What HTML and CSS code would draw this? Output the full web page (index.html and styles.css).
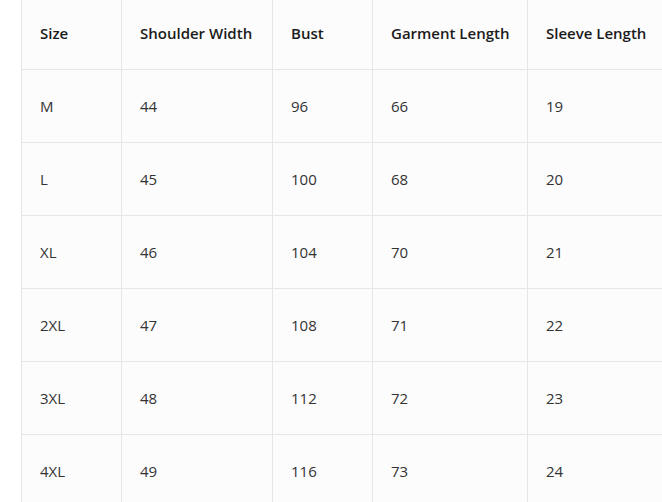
FILE: index.html
```html
<!DOCTYPE html>
<html>
<head>
<meta charset="utf-8">
<link rel="stylesheet" href="styles.css">
</head>
<body>
<div class="wrap">
<table class="size-table">
  <colgroup>
    <col class="c1"><col class="c2"><col class="c3"><col class="c4"><col class="c5">
  </colgroup>
  <thead>
    <tr><th>Size</th><th>Shoulder Width</th><th>Bust</th><th>Garment Length</th><th>Sleeve Length</th></tr>
  </thead>
  <tbody>
    <tr><td>M</td><td>44</td><td>96</td><td>66</td><td>19</td></tr>
    <tr><td>L</td><td>45</td><td>100</td><td>68</td><td>20</td></tr>
    <tr><td>XL</td><td>46</td><td>104</td><td>70</td><td>21</td></tr>
    <tr><td>2XL</td><td>47</td><td>108</td><td>71</td><td>22</td></tr>
    <tr><td>3XL</td><td>48</td><td>112</td><td>72</td><td>23</td></tr>
    <tr><td>4XL</td><td>49</td><td>116</td><td>73</td><td>24</td></tr>
  </tbody>
</table>
</div>
</body>
</html>
```

FILE: styles.css
```css
html, body {
  margin: 0;
  padding: 0;
  background: #ffffff;
  overflow: hidden;
}
body {
  width: 662px;
  height: 502px;
  font-family: "Open Sans", "Noto Sans", sans-serif;
}
.wrap {
  margin-left: 21px;
  width: 641px;
  height: 502px;
  overflow: hidden;
}
.size-table {
  border-collapse: collapse;
  table-layout: fixed;
  width: 656px;
  background: #fcfcfc;
  border-left: 1px solid #e6e6e6;
}
.c1 { width: 100px; }
.c2 { width: 151px; }
.c3 { width: 100px; }
.c4 { width: 155px; }
.c5 { width: 150px; }
.size-table th,
.size-table td {
  text-align: left;
  padding: 0 0 0 18px;
  border-right: 1px solid #e6e6e6;
  border-bottom: 1px solid #e6e6e6;
  font-size: 15px;
  white-space: nowrap;
}
.size-table th {
  height: 65px;
  padding-bottom: 4px;
  font-weight: 600;
  color: #1b1b1b;
  vertical-align: middle;
}
.size-table td {
  height: 72px;
  color: #333333;
  font-weight: 400;
  vertical-align: middle;
}
```
